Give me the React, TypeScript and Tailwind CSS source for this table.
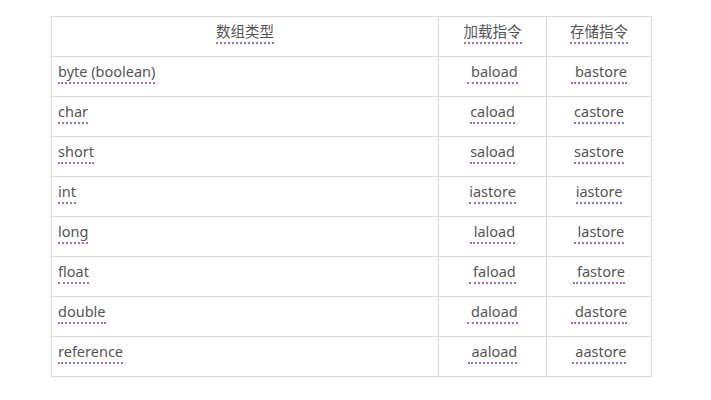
const rows: [string, string, string][] = [
  ["byte (boolean)", " baload", " bastore"],
  ["char", "caload", "castore"],
  ["short", "saload", "sastore"],
  ["int", "iastore", "iastore"],
  ["long", " laload", " lastore"],
  ["float", " faload", " fastore"],
  ["double", " daload", " dastore"],
  ["reference", " aaload", " aastore"],
];

function Term({ children }: { children: string }) {
  return (
    <span className="inline-block whitespace-pre border-b-2 border-dotted border-[#a56cc1] leading-[21px]">
      {children}
    </span>
  );
}

export default function App() {
  return (
    <div
      className="h-[400px] w-[711px] bg-white pt-4 pl-[51px] text-[14.5px] text-[#555]"
      style={{ fontFamily: '"Noto Sans", "Noto Sans CJK SC", sans-serif' }}
    >
      <table className="w-[601px] border-collapse">
        <thead>
          <tr className="h-10">
            <th className="w-[387px] border border-[#dadada] pb-2 font-normal">
              <Term>数组类型</Term>
            </th>
            <th className="w-[108px] border border-[#dadada] pb-2 font-normal">
              <Term>加载指令</Term>
            </th>
            <th className="border border-[#dadada] pb-2 font-normal">
              <Term>存储指令</Term>
            </th>
          </tr>
        </thead>
        <tbody>
          {rows.map(([t, l, s]) => (
            <tr key={t} className="h-10">
              <td className="border border-[#dadada] px-[6px] pb-2">
                <Term>{t}</Term>
              </td>
              <td className="border border-[#dadada] pb-2 text-center">
                <Term>{l}</Term>
              </td>
              <td className="border border-[#dadada] pb-2 text-center">
                <Term>{s}</Term>
              </td>
            </tr>
          ))}
        </tbody>
      </table>
    </div>
  );
}
